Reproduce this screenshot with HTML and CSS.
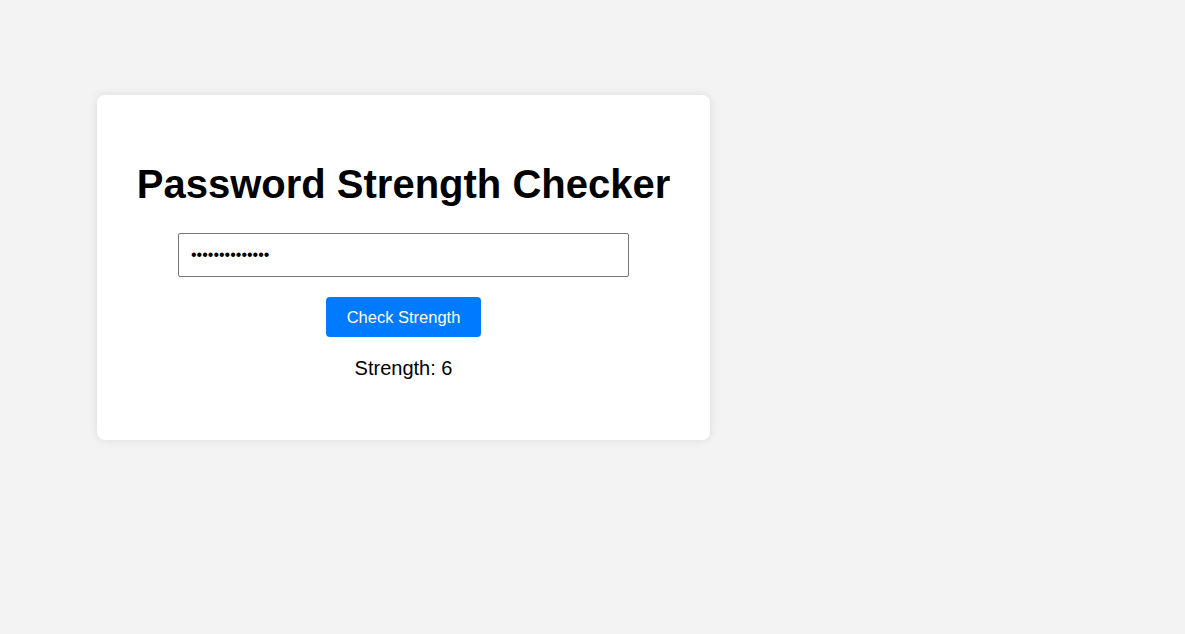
FILE: index.html
```html
<!DOCTYPE html>
<html>
<head>
<meta charset="utf-8">
<title>Password Strength Checker</title>
<link rel="stylesheet" href="styles.css">
</head>
<body>
<div class="page">
  <div class="card">
    <h1 class="title">Password Strength Checker</h1>
    <input class="pw" type="password" value="Abcdefgh12345!">
    <div class="actions"><button class="btn">Check Strength</button></div>
    <p class="result">Strength: 6</p>
  </div>
</div>
</body>
</html>
```
FILE: styles.css
```css
html, body {
  margin: 0;
  padding: 0;
  background: #f3f3f3;
  font-family: "Liberation Sans", Arial, sans-serif;
}
.page {
  padding: 95px 97px;
  display: flex;
  align-items: flex-start;
}
.card {
  background: #fff;
  border-radius: 8px;
  box-shadow: 0 0 10px rgba(0,0,0,0.1);
  padding: 40px;
  width: 533px;
  text-align: center;
}
.title {
  font-size: 40px;
  font-weight: bold;
  margin: 27px -5px 26px;
  white-space: nowrap;
  color: #000;
}
.pw {
  width: 425px;
  padding: 12px;
  font-size: 16px;
  line-height: 18px;
  border: 1px solid #767676;
  border-radius: 2px;
  font-family: "Liberation Sans", Arial, sans-serif;
  margin: 0;
  display: block;
  margin-left: auto;
  margin-right: auto;
}
.actions {
  margin-top: 20px;
}
.btn {
  background: #007bff;
  color: #fff;
  border: none;
  border-radius: 4px;
  font-family: "Liberation Sans", Arial, sans-serif;
  font-size: 16.5px;
  line-height: 18px;
  padding: 11px 20px;
  width: 155px;
  cursor: pointer;
}
.result {
  font-size: 20px;
  margin: 20px 0 20px;
  color: #000;
}
```
